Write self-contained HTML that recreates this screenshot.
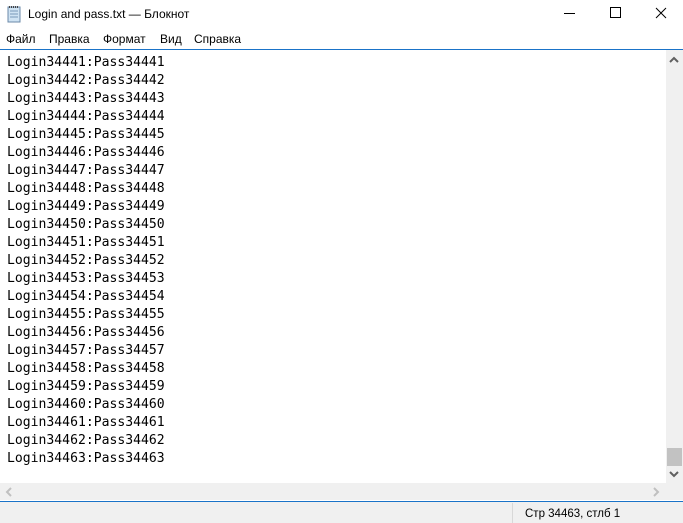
<!DOCTYPE html><html><head><meta charset="utf-8"><style>
body{margin:0;width:683px;height:523px;overflow:hidden;background:#fff;font-family:"Liberation Sans","DejaVu Sans",sans-serif;position:relative}
.a{position:absolute}
.t{font-size:12px;color:#000}
pre{margin:0;font-family:"DejaVu Sans Mono",monospace;font-size:13.1px;line-height:18px;color:#000}
</style></head><body>
<svg class="a" style="left:7px;top:5px" width="14" height="18"><rect x="1" y="2" width="12" height="15" fill="#cfe3f3" stroke="#6b8aa8"/><path d="M3 6h8M3 9h8M3 12h8" stroke="#7a9ab8"/><path d="M2 2h10" stroke="#444" stroke-width="2" stroke-dasharray="1 1"/></svg>
<div class="a t" style="left:28px;top:7px">Login and pass.txt — Блокнот</div>
<div class="a" style="left:564px;top:13px;width:11px;height:1px;background:#000"></div>
<div class="a" style="left:610px;top:7px;width:9px;height:9px;border:1px solid #000"></div>
<svg class="a" style="left:655px;top:7px" width="12" height="12"><path d="M1 1L11 11M11 1L1 11" stroke="#000"/></svg>
<div class="a t" style="left:6px;top:32px">Файл</div>
<div class="a t" style="left:49px;top:32px">Правка</div>
<div class="a t" style="left:103px;top:32px">Формат</div>
<div class="a t" style="left:160px;top:32px">Вид</div>
<div class="a t" style="left:194px;top:32px">Справка</div>
<div class="a" style="left:0;top:49px;width:683px;height:1px;background:#1a73c8"></div>
<pre class="a" style="left:7px;top:54px">Login34441:Pass34441
Login34442:Pass34442
Login34443:Pass34443
Login34444:Pass34444
Login34445:Pass34445
Login34446:Pass34446
Login34447:Pass34447
Login34448:Pass34448
Login34449:Pass34449
Login34450:Pass34450
Login34451:Pass34451
Login34452:Pass34452
Login34453:Pass34453
Login34454:Pass34454
Login34455:Pass34455
Login34456:Pass34456
Login34457:Pass34457
Login34458:Pass34458
Login34459:Pass34459
Login34460:Pass34460
Login34461:Pass34461
Login34462:Pass34462
Login34463:Pass34463</pre>
<div class="a" style="left:666px;top:50px;width:17px;height:433px;background:#f0f0f0"></div>
<div class="a" style="left:667px;top:448px;width:15px;height:18px;background:#c2c2c2"></div>
<svg class="a" style="left:669px;top:56px" width="10" height="8"><path d="M1 6L5 2L9 6" stroke="#606060" stroke-width="2" fill="none"/></svg>
<svg class="a" style="left:669px;top:470px" width="10" height="8"><path d="M1 2L5 6L9 2" stroke="#606060" stroke-width="2" fill="none"/></svg>
<div class="a" style="left:0;top:483px;width:683px;height:17px;background:#f0f0f0"></div>
<svg class="a" style="left:5px;top:487px" width="8" height="10"><path d="M6 1L2 5L6 9" stroke="#c0c0c0" stroke-width="2" fill="none"/></svg>
<svg class="a" style="left:652px;top:487px" width="8" height="10"><path d="M2 1L6 5L2 9" stroke="#c0c0c0" stroke-width="2" fill="none"/></svg>
<div class="a" style="left:0;top:500px;width:683px;height:1px;background:#fff"></div>
<div class="a" style="left:0;top:501px;width:683px;height:1px;background:#1a73c8"></div>
<div class="a" style="left:0;top:502px;width:683px;height:21px;background:#f0f0f0"></div>
<div class="a" style="left:512px;top:503px;width:1px;height:20px;background:#d8d8d8"></div>
<div class="a t" style="left:525px;top:508px;font-size:11.5px">Стр 34463, стлб 1</div>
</body></html>
